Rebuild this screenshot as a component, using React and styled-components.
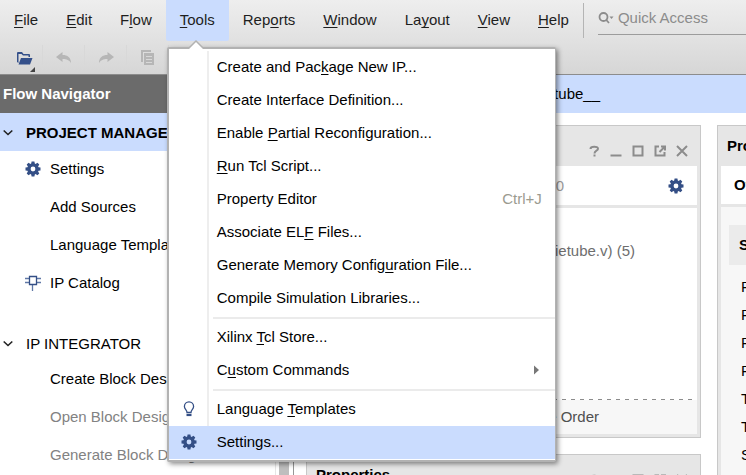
import React from "react";
import styled, { createGlobalStyle, css } from "styled-components";

const Global = createGlobalStyle`
  * { box-sizing: border-box; }
  body { margin: 0; overflow: hidden; background: #fff; }
  body, button, input { font-family: "Liberation Sans", Arial, sans-serif; font-size: 15px; line-height: 18px; color: #000; }
  button { border: 0; padding: 0; margin: 0; background: none; text-align: left; white-space: nowrap; }
  u { text-decoration-thickness: 1px; text-underline-offset: 2px; text-decoration-skip-ink: none; }
  svg { display: block; flex: none; }
`;

const Window = styled.div`
  height: 100vh;
  display: flex;
  flex-direction: column;
  overflow: hidden;
`;
const Header = styled.header`
  flex: none;
  background: linear-gradient(#eeeeee, #d6d6d6);
  border-bottom: 1px solid #8c8c8c;
`;
const TopRow = styled.div`
  display: flex;
  height: 41px;
`;
const MenuBar = styled.nav`
  display: flex;
  flex: none;
`;
const MenuSlot = styled.div`
  position: relative;
  display: flex;
`;
const MenuButton = styled.button`
  padding: 0 14px 1px;
  color: #1e1e1e;
  border-radius: 0 0 2px 2px;
  ${(p) => p.$open && css`background: #cadcfe;`}
`;
const Search = styled.label`
  display: flex;
  flex: 1;
  min-width: 0;
  align-items: center;
  gap: 4px;
  margin: 3px 0 6px 14px;
  padding-bottom: 2px;
  border-bottom: 1px solid #9c9c9c;
`;
const SearchDivider = styled.span`
  width: 1px;
  flex: none;
  margin: 3px 0;
  background: #b4b4b4;
`;
const SearchInput = styled.input`
  flex: 1;
  min-width: 0;
  padding: 0;
  border: 0;
  outline: 0;
  background: none;
  &::placeholder { color: #8c8c8c; opacity: 1; }
`;
const Toolbar = styled.div`
  display: flex;
  height: 33px;
  padding-left: 1px;
`;
const ToolButton = styled.button`
  width: 42px;
  display: flex;
  align-items: center;
  justify-content: center;
  background: linear-gradient(#d8d8d8, #d8d8d8) right 4px / 1px 20px no-repeat;
`;

const Popup = styled.div`
  position: absolute;
  z-index: 5;
  top: 47px;
  left: 1px;
  width: 389px;
  padding: 2px 0 1px;
  background: #fff;
  border: 2px solid #b2b2b2;
  border-width: 2px 1px 2px 2px;
  border-radius: 2px;
  box-shadow: 2px 2px 5px rgba(0, 0, 0, 0.45);
`;
const Arrow = styled.svg`
  position: absolute;
  top: -9px;
  left: 19px;
`;
const MenuItem = styled.button`
  display: grid;
  grid-template-columns: 40px 1fr auto;
  align-items: center;
  width: 100%;
  height: 33px;
  padding: 0 13px 2px 0;
  background: ${(p) => (p.$active ? "#cadcfe" : "linear-gradient(90deg, #fff 38px, #eee 38px, #eee 40px, #fff 40px)")};
`;
const ItemIcon = styled.span`
  display: flex;
  justify-content: center;
`;
const ItemText = styled.span`
  padding-left: 8px;
`;
const Shortcut = styled.span`
  color: #9b9b90;
`;
const Separator = styled.div`
  height: 6px;
  padding: 2px 0 2px 44px;
  background: linear-gradient(90deg, #fff 38px, #eee 38px, #eee 40px, #fff 40px);
  &::after { content: ""; display: block; height: 2px; background: #ebebeb; }
`;

const Body = styled.div`
  display: flex;
  flex: 1;
  min-height: 0;
`;
const Navigator = styled.aside`
  display: flex;
  flex-direction: column;
  width: 294px;
  flex: none;
  border-right: 1px solid #969696;
`;
const NavTitle = styled.h2`
  margin: 0;
  padding: 0 3px;
  font-size: 15px;
  line-height: 38px;
  color: #fff;
  background: #6b6b6b;
`;
const NavScroll = styled.div`
  display: flex;
  flex: 1;
  min-height: 0;
`;
const NavList = styled.div`
  flex: 1;
  overflow: hidden;
`;
const ScrollTrack = styled.div`
  width: 18px;
  padding: 0 4px 0 3px;
  border-left: 1px solid #e6e6e6;
  &::before { content: ""; display: block; height: 100%; background: #bebebe; }
`;
const NavGroup = styled.button`
  display: flex;
  align-items: center;
  width: 100%;
  gap: 13px;
  height: 35px;
  padding: 1px 0 0 3px;
  ${(p) => p.$active && css`height: 38px; background: #cadcfe; font-weight: bold;`}
`;
const NavItems = styled.div`
  padding-bottom: 23px;
`;
const NavItem = styled.button`
  display: grid;
  grid-template-columns: 16px 1fr;
  gap: 9px;
  align-items: center;
  width: 100%;
  height: 38px;
  padding: 0 0 2px 25px;
  color: ${(p) => (p.disabled ? "#828282" : "#000")};
`;

const Main = styled.main`
  display: flex;
  flex-direction: column;
  flex: 1;
  min-width: 0;
`;
const ProjectTitle = styled.h1`
  flex: none;
  margin: 0;
  padding-left: 12px;
  font-size: 15px;
  font-weight: normal;
  line-height: 38px;
  background: #cadcfe;
`;
const ProjectName = styled.span`
  display: block;
  width: 294px;
  text-align: right;
`;
const Columns = styled.div`
  display: grid;
  grid-template-columns: 395px minmax(320px, 1fr);
  gap: 16px;
  padding: 12px 0 0 12px;
  flex: 1;
  min-height: 0;
`;
const Stack = styled.div`
  display: flex;
  flex-direction: column;
  gap: 16px;
`;
const Panel = styled.section`
  padding: 0 3px 3px;
  background: #e6e6e6;
  border: 1px solid #c8c8c8;
`;
const PanelHead = styled.div`
  display: flex;
  align-items: center;
  justify-content: flex-end;
  gap: 6px;
  height: 40px;
  padding: 9px 7px 0 6px;
`;
const PanelTitle = styled.h3`
  margin: 0 auto 9px 0;
  font-size: 15px;
`;
const IconButton = styled.button`
  display: block;
  width: 16px;
  height: 16px;
`;
const PanelTools = styled.div`
  display: flex;
  align-items: center;
  justify-content: flex-end;
  height: 39px;
  margin-bottom: 3px;
  padding-right: 13px;
  background: #fff;
`;
const Count = styled.span`
  margin-right: 104px;
  color: #9b9b9b;
`;
const Tree = styled.div`
  height: 191px;
  padding: 34px 62px 0 0;
  text-align: right;
  color: #6e6e6e;
  background: #fff;
`;
const BottomTab = styled.button`
  display: block;
  width: 100%;
  height: 35px;
  padding-right: 98px;
  text-align: right;
  color: #505050;
  background: repeating-linear-gradient(90deg, #8c8c8c 0 4px, #fff 4px 9px) top / 100% 1px no-repeat #f7f7f7;
`;
const Overview = styled.h4`
  margin: 0 0 3px;
  padding-left: 13px;
  font-size: 15px;
  line-height: 38px;
  background: #fff;
`;
const Summary = styled.div`
  padding: 18px 8px;
  background: #f7f7f7;
`;
const SummaryTitle = styled.h4`
  margin: 0 0 8px;
  padding-left: 10px;
  font-size: 15px;
  line-height: 40px;
  background: #ebebeb;
`;
const SummaryLine = styled.div`
  padding-left: 12px;
  line-height: 28px;
`;

const Gear = () => (
  <svg width="16" height="16" viewBox="0 0 16 16" fill="#344f86" fillRule="evenodd">
    <path d="M6.6.5h2.8l.4 2 .8.4 1.8-1.2 1.9 1.9-1.2 1.8.4.8 2 .4v2.8l-2 .4-.4.8 1.2 1.8-1.9 1.9-1.8-1.2-.8.4-.4 2H6.6l-.4-2-.8-.4-1.8 1.2-1.9-1.9 1.2-1.8-.4-.8-2-.4V6.6l2-.4.4-.8-1.2-1.8 1.9-1.9 1.8 1.2.8-.4zM8 5.6a2.4 2.4 0 1 0 0 4.8 2.4 2.4 0 0 0 0-4.8z" />
  </svg>
);
const Bulb = () => (
  <svg width="14" height="16" viewBox="0 0 14 16" fill="none" stroke="#344f86" strokeWidth="1.3">
    <path d="M5 11.500C5 9 2.400 8.300 2.400 5.400a4.600 4.600 0 0 1 9.200 0C11.600 8.300 9 9 9 11.500z" />
    <path d="M4.500 14h5" strokeWidth="2.200" />
  </svg>
);
const Chip = () => (
  <svg width="16" height="16" viewBox="0 0 16 16" fill="none" stroke="#6078a6">
    <path d="M0 3.500h4M0 7.500h4M11 3.500h5M11 7.500h5M7.500 10v6" strokeWidth="1.300" />
    <path d="M4.500 1.500h7v8h-7z" stroke="#344f86" strokeWidth="1.300" />
  </svg>
);
const Chevron = () => (
  <svg width="10" height="10" viewBox="0 0 10 10" fill="none" stroke="#222" strokeWidth="1.6">
    <path d="M.7 2.500 5 6.500l4.300-4" />
  </svg>
);
const Open = () => (
  <svg width="28" height="30" viewBox="0 0 28 30">
    <path fill="#34508a" d="M9 10q0-1 1-1h4l1.500 2H21q1 0 1 1v2h-1.500v-1.500H15L13.500 11h-3v9L9 19zM13 15h11.500L22 21.500H10.500z" />
    <path fill="#444" d="M27 24v5h-5z" />
  </svg>
);
const Undo = () => (
  <svg width="16" height="12" viewBox="0 0 16 12" fill="#b6b6b6">
    <path d="M0 5 6.500 0v3c5 0 8.500 2.500 8.500 8-2-3-4-4-8.500-4v3z" />
  </svg>
);
const Redo = () => (
  <svg width="16" height="12" viewBox="0 0 16 12" fill="#b6b6b6">
    <path d="M16 5 9.500 0v3C4.500 3 1 5.500 1 11c2-3 4-4 8.500-4v3z" />
  </svg>
);
const Copy = () => (
  <svg width="14" height="16" viewBox="0 0 14 16">
    <path fill="#b6b6b6" d="M0 0h10v2H2v10H0zM3 3h10v12H3z" />
    <path stroke="#d8d8d8" d="M5 6.500h6M5 9.500h6M5 12.500h6" />
  </svg>
);
const SearchIcon = () => (
  <svg width="16" height="14" viewBox="0 0 16 14" fill="none" stroke="#8c8c8c" strokeWidth="1.8">
    <circle cx="5.500" cy="6" r="4" />
    <path d="m8.300 9 2.700 3" />
    <path d="M11.500 5.500h4L13.500 8z" fill="#8c8c8c" stroke="none" />
  </svg>
);
const windowIcons = [
  ["Help", "M4.500 6C4.500 3 12 3 12 5.800C12 8 8.500 7.500 8.500 10.500M8.500 11.500v2"],
  ["Minimize", "M2.500 12.500h11"],
  ["Maximize", "M3.500 3.500h9v9h-9z"],
  ["Float", "M7 3.500H3.500v9h9V9M9 3.500h4v4M13 3.500 7.500 9"],
  ["Close", "M3 3l10 10M13 3 3 13"],
];

const tools = [
  ["Open", Open],
  ["Undo", Undo],
  ["Redo", Redo],
  ["Copy", Copy],
];

const menus = ["_File", "_Edit", "F_low", "_Tools", "Rep_orts", "_Window", "La_yout", "_View", "_Help"];

const toolsMenu = [
  { text: "Create and Pac_kage New IP..." },
  { text: "Create Interface Definition..." },
  { text: "Enable _Partial Reconfiguration..." },
  { text: "_Run Tcl Script..." },
  { text: "Property Editor", shortcut: "Ctrl+J" },
  { text: "Associate EL_F Files..." },
  { text: "Generate Memory Config_uration File..." },
  { text: "Compile Simulation Libraries..." },
  null,
  { text: "Xilinx _Tcl Store..." },
  { text: "C_ustom Commands", submenu: true },
  null,
  { text: "Language _Templates", icon: Bulb },
  { text: "Settings...", icon: Gear, active: true },
];

function Mnemonic({ text }) {
  const i = text.indexOf("_");
  if (i < 0) return text;
  return (
    <>
      {text.slice(0, i)}
      <u>{text[i + 1]}</u>
      {text.slice(i + 2)}
    </>
  );
}

function ToolsPopup() {
  return (
    <Popup role="menu">
      <Arrow width="16" height="9" viewBox="0 0 16 9">
        <path d="M0 9 8 1l8 8" fill="#fff" stroke="#b2b2b2" strokeWidth="1.5" />
      </Arrow>
      {toolsMenu.map((item, i) =>
        item ? (
          <MenuItem key={i} role="menuitem" $active={item.active}>
            <ItemIcon>{item.icon && <item.icon />}</ItemIcon>
            <ItemText><Mnemonic text={item.text} /></ItemText>
            {item.shortcut && <Shortcut>{item.shortcut}</Shortcut>}
            {item.submenu && (
              <svg width="8" height="10" viewBox="0 0 8 10"><path d="M0 .5 5 5 0 9.500z" fill="#777" /></svg>
            )}
          </MenuItem>
        ) : (
          <Separator key={i} role="separator" />
        )
      )}
    </Popup>
  );
}

function WindowButtons() {
  return windowIcons.map(([label, d]) => (
    <IconButton key={label} aria-label={label}>
      <svg width="16" height="16" viewBox="0 0 16 16" fill="none" stroke="#8c8c8c" strokeWidth="2">
        <path d={d} />
      </svg>
    </IconButton>
  ));
}

export default function App() {
  return (
    <Window>
      <Global />
      <Header>
        <TopRow>
          <MenuBar>
            {menus.map((m) => (
              <MenuSlot key={m}>
                <MenuButton $open={m === "_Tools"}><Mnemonic text={m} /></MenuButton>
                {m === "_Tools" && <ToolsPopup />}
              </MenuSlot>
            ))}
          </MenuBar>
          <SearchDivider />
          <Search>
            <SearchIcon />
            <SearchInput aria-label="Quick Access" placeholder="Quick Access" />
          </Search>
        </TopRow>
        <Toolbar>
          {tools.map(([label, Icon]) => (
            <ToolButton key={label} aria-label={label}><Icon /></ToolButton>
          ))}
        </Toolbar>
      </Header>
      <Body>
        <Navigator>
          <NavTitle>Flow Navigator</NavTitle>
          <NavScroll>
            <NavList>
              <NavGroup $active><Chevron />PROJECT MANAGER</NavGroup>
              <NavItems>
                <NavItem><Gear /><span>Settings</span></NavItem>
                <NavItem><i /><span>Add Sources</span></NavItem>
                <NavItem><i /><span>Language Templates</span></NavItem>
                <NavItem><Chip /><span>IP Catalog</span></NavItem>
              </NavItems>
              <NavGroup><Chevron />IP INTEGRATOR</NavGroup>
              <NavItem><i /><span>Create Block Design</span></NavItem>
              <NavItem disabled><i /><span>Open Block Design</span></NavItem>
              <NavItem disabled><i /><span>Generate Block Design</span></NavItem>
            </NavList>
            <ScrollTrack />
          </NavScroll>
        </Navigator>
        <Main>
          <ProjectTitle><ProjectName>nixietube__</ProjectName></ProjectTitle>
          <Columns>
            <Stack>
              <Panel>
                <PanelHead><WindowButtons /></PanelHead>
                <PanelTools>
                  <Count>0</Count>
                  <IconButton aria-label="Panel settings"><Gear /></IconButton>
                </PanelTools>
                <Tree>(nixietube.v) (5)</Tree>
                <BottomTab>Compile Order</BottomTab>
              </Panel>
              <Panel>
                <PanelHead>
                  <PanelTitle>Properties</PanelTitle>
                  <WindowButtons />
                </PanelHead>
              </Panel>
            </Stack>
            <Panel>
              <PanelHead><PanelTitle>Project Summary</PanelTitle></PanelHead>
              <Overview>Overview</Overview>
              <Summary>
                <SummaryTitle>Settings</SummaryTitle>
                {["Project name:", "Project location:", "Product family:", "Project part:", "Top module name:", "Target language:", "Simulator language:"].map((t) => (
                  <SummaryLine key={t}>{t}</SummaryLine>
                ))}
              </Summary>
            </Panel>
          </Columns>
        </Main>
      </Body>
    </Window>
  );
}
